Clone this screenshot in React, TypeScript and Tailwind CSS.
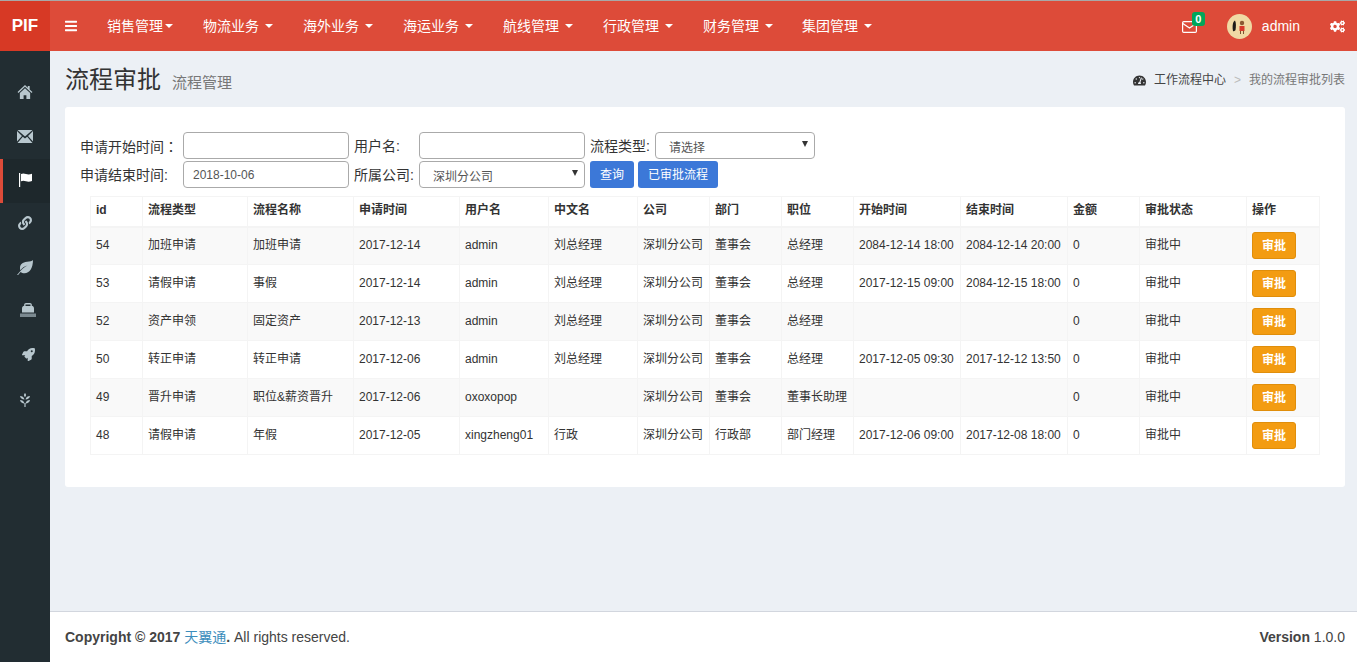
import { FaBars, FaCogs, FaLink, FaRocket, FaTachometerAlt } from 'react-icons/fa';

const menus = [
  { label: '销售管理', width: 'w-[96px]', tight: true },
  { label: '物流业务', width: 'w-[100px]' },
  { label: '海外业务', width: 'w-[100px]' },
  { label: '海运业务', width: 'w-[100px]' },
  { label: '航线管理', width: 'w-[100px]' },
  { label: '行政管理', width: 'w-[100px]' },
  { label: '财务管理', width: 'w-[99px]' },
  { label: '集团管理', width: 'w-[100px]' },
];

const columns = [
  { label: 'id', width: 'w-[52px]' },
  { label: '流程类型', width: 'w-[105px]' },
  { label: '流程名称', width: 'w-[106px]' },
  { label: '申请时间', width: 'w-[106px]' },
  { label: '用户名', width: 'w-[89px]' },
  { label: '中文名', width: 'w-[89px]' },
  { label: '公司', width: 'w-[72px]' },
  { label: '部门', width: 'w-[72px]' },
  { label: '职位', width: 'w-[72px]' },
  { label: '开始时间', width: 'w-[107px]' },
  { label: '结束时间', width: 'w-[107px]' },
  { label: '金额', width: 'w-[72px]' },
  { label: '审批状态', width: 'w-[107px]' },
  { label: '操作', width: 'w-[73px]' },
];

const rows = [
  ['54', '加班申请', '加班申请', '2017-12-14', 'admin', '刘总经理', '深圳分公司', '董事会', '总经理', '2084-12-14 18:00', '2084-12-14 20:00', '0', '审批中'],
  ['53', '请假申请', '事假', '2017-12-14', 'admin', '刘总经理', '深圳分公司', '董事会', '总经理', '2017-12-15 09:00', '2084-12-15 18:00', '0', '审批中'],
  ['52', '资产申领', '固定资产', '2017-12-13', 'admin', '刘总经理', '深圳分公司', '董事会', '总经理', '', '', '0', '审批中'],
  ['50', '转正申请', '转正申请', '2017-12-06', 'admin', '刘总经理', '深圳分公司', '董事会', '总经理', '2017-12-05 09:30', '2017-12-12 13:50', '0', '审批中'],
  ['49', '晋升申请', '职位&薪资晋升', '2017-12-06', 'oxoxopop', '', '深圳分公司', '董事会', '董事长助理', '', '', '0', '审批中'],
  ['48', '请假申请', '年假', '2017-12-05', 'xingzheng01', '行政', '深圳分公司', '行政部', '部门经理', '2017-12-06 09:00', '2017-12-08 18:00', '0', '审批中'],
];

function HomeIcon() {
  return (
    <svg width="16" height="14" viewBox="0 0 16 15" fill="currentColor">
      <path d="M8 0 0 7.500l1 1L8 2l7 6.500 1-1-3-2.800V1h-2v1.900L8 0z" />
      <path d="M8 3.500 2.500 8.600V15H6.500v-4h3v4h4V8.600L8 3.500z" />
    </svg>
  );
}

function MailIcon() {
  return (
    <svg width="16" height="13" viewBox="0 0 16 13" fill="currentColor">
      <path d="M.5 0h15L8 6.500.5 0z" />
      <path d="M0 1v10.500L5 6 0 1zM16 1v10.500L11 6l5-5z" />
      <path d="M5.800 6.800 8 8.500l2.200-1.700L15.500 13H.5l5.300-6.200z" />
    </svg>
  );
}

function FlagIcon() {
  return (
    <svg width="13" height="14" viewBox="0 0 13 14" fill="currentColor">
      <path d="M0 0h1.200v14H0z" />
      <path d="M2 1c2-1 3.500-.5 5 0 2 .7 4 .5 6-.3v7.300c-2 .8-4 1-6 .3-1.500-.5-3-1-5 0V1z" />
    </svg>
  );
}

function LeafIcon() {
  return (
    <svg width="16" height="15" viewBox="0 0 16 15" fill="currentColor">
      <path d="M16 0c-1 1-3 1.500-6 1.800C5.500 2.300 3 4.500 3 8c0 .8.100 1.500.4 2.200 1.600-2.200 4-3.800 7.100-4.700-3 1.400-6.300 4-9 7.800L0 15l1 .1 2.600-3.100c1 .9 2.300 1.300 3.900 1.300C12.500 13.300 16 8 16 0z" />
    </svg>
  );
}

function TowerIcon() {
  return (
    <svg width="16" height="14" viewBox="0 0 16 14" fill="currentColor">
      <path d="M2 9.500V5.500C2 3.800 3.200 3 4.200 2.800V1.500C4.200.8 5 0 6 0h4c1 0 1.800.8 1.800 1.500v1.300C12.800 3 14 3.800 14 5.500v4H2zM5.500 3h5V1.500h-5V3z" />
      <path d="M0 10.500h16V14H0z" opacity=".6" />
    </svg>
  );
}

function GrainIcon() {
  return (
    <svg width="10" height="14" viewBox="0 0 10 14" fill="currentColor">
      <path d="M5 0c1.300 1.100 1.500 2.700 0 4.200C3.500 2.700 3.700 1.100 5 0z" />
      <path d="M0 3c2 0 4.100 1 4.500 3.500C2.200 6.500.3 5.300 0 3zM10 3c-2 0-4.100 1-4.500 3.500C7.800 6.500 9.700 5.300 10 3z" />
      <path d="M0 7c2 0 4.100 1 4.500 3.500C2.200 10.500.3 9.300 0 7zM10 7c-2 0-4.100 1-4.500 3.500C7.800 10.500 9.700 9.300 10 7z" />
      <path d="M4.400 10h1.200v4H4.400z" />
    </svg>
  );
}

function OutlineMail() {
  return (
    <svg width="15" height="12" viewBox="0 0 15 12" fill="none" stroke="currentColor" strokeWidth="1.200">
      <rect x=".6" y=".6" width="13.800" height="10.800" rx="1.200" />
      <path d="M.8 2.500 7.500 7l6.700-4.500" />
    </svg>
  );
}

function Avatar() {
  return (
    <svg width="25" height="25" viewBox="0 0 25 25">
      <circle cx="12.500" cy="12.500" r="12.500" fill="#f0d9a4" />
      <path d="M8 6.500c-2 1-3 5-2 10.500 1 .5 2 0 2.500-1 .5-3 .8-7-.5-9.500z" fill="#1c1a18" />
      <circle cx="15" cy="9" r="2.200" fill="#8a5a34" />
      <path d="M12.500 12h5v5h-5z" fill="#d8392b" />
      <path d="M13 17h1v3h-1zM16 17h1v3h-1z" fill="#7a5230" />
    </svg>
  );
}

function SideItem({ children, active, pad = 'pb-[2px]' }: { children: React.ReactNode; active?: boolean; pad?: string }) {
  return (
    <div
      className={
        active
          ? `flex h-[44px] items-center justify-center border-l-[3px] border-[#dd4b39] bg-[#1e282c] pr-[3px] text-white ${pad}`
          : `flex h-[44px] items-center justify-center text-[#b8c7ce] ${pad}`
      }
    >
      {children}
    </div>
  );
}

const fieldClass = 'h-[27px] rounded-[4px] border border-[#aaa] bg-white text-xs text-[#555]';

function SelectBox({ value, width }: { value: string; width: string }) {
  return (
    <div className={`relative ${width}`}>
      <select className={`${fieldClass} w-full appearance-none pt-[4px] pl-[13px]`} defaultValue={value}>
        <option>{value}</option>
      </select>
      <span className="pointer-events-none absolute top-[9px] right-[7px] border-x-[3px] border-t-[6px] border-x-transparent border-t-[#333]" />
    </div>
  );
}

export default function App() {
  return (
    <div
      className="flex h-[662px] w-[1357px] flex-col overflow-hidden border-t border-[#a8a8a8] bg-[#ecf0f5] text-[#333]"
      style={{ fontFamily: '"Liberation Sans", "Noto Sans CJK SC", sans-serif' }}
    >
      <header className="flex h-[50px] shrink-0 bg-[#dd4b39] text-white">
        <div className="flex w-[50px] items-center justify-center bg-[#d73925] text-[17px] font-bold">PIF</div>
        <div className="flex w-[57px] items-center pl-[15px]">
          <FaBars className="h-[14px] w-[12px]" />
        </div>
        <nav className="flex items-center text-sm">
          {menus.map((m) => (
            <div key={m.label} className={`flex items-center ${m.width}`}>
              <span>{m.label}</span>
              <span className={`${m.tight ? 'ml-[2px]' : 'ml-[6px]'} border-x-4 border-t-4 border-x-transparent border-t-white`} />
            </div>
          ))}
        </nav>
        <div className="ml-auto flex items-center pr-[12px]">
          <div className="relative mr-[30px] pt-[2px]">
            <OutlineMail />
            <span className="absolute -top-[7px] left-[10px] h-[14px] w-[13px] rounded-[3px] bg-[#00a65a] text-center text-[11px] leading-[14px] font-bold">0</span>
          </div>
          <Avatar />
          <span className="mr-[30px] ml-[10px] text-sm">admin</span>
          <FaCogs className="h-[15px] w-[15px]" />
        </div>
      </header>

      <div className="flex min-h-0 flex-1">
        <aside className="w-[50px] shrink-0 bg-[#222d32] pt-[20px]">
          <SideItem><HomeIcon /></SideItem>
          <SideItem><MailIcon /></SideItem>
          <SideItem active><FlagIcon /></SideItem>
          <SideItem pad="pb-[4px]"><FaLink className="h-[14px] w-[14px]" /></SideItem>
          <SideItem pad="pb-[4px]"><LeafIcon /></SideItem>
          <SideItem pad="pb-[6px] pl-[6px]"><TowerIcon /></SideItem>
          <SideItem pad="pb-[6px] pl-[6px]"><FaRocket className="h-[13px] w-[13px]" /></SideItem>
          <SideItem><GrainIcon /></SideItem>
        </aside>

        <div className="flex min-w-0 flex-1 flex-col">
          <main className="flex-1 pr-[12px] pl-[15px]">
            <div className="flex h-[56px] items-center justify-between pt-[2px]">
              <div className="flex items-baseline">
                <h1 className="text-2xl leading-[30px] font-normal">流程审批</h1>
                <span className="ml-[11px] text-[15px] text-[#777]">流程管理</span>
              </div>
              <div className="flex items-center text-xs">
                <FaTachometerAlt className="mr-[8px] h-[13px] w-[13px]" />
                <span className="text-[#444]">工作流程中心</span>
                <span className="mx-[8px] text-[#bbb]">&gt;</span>
                <span className="text-[#777]">我的流程审批列表</span>
              </div>
            </div>

            <section className="h-[380px] rounded-[3px] bg-white pt-[25px]">
              <div className="flex h-[29px] items-start pl-[15px] text-sm">
                <label className="w-[103px] pt-[4px]">申请开始时间<span className="font-['Noto_Sans_CJK_TC']">：</span></label>
                <input className={`${fieldClass} w-[166px]`} />
                <label className="w-[70px] pt-[4px] pl-[5px]">用户名:</label>
                <input className={`${fieldClass} w-[166px]`} />
                <label className="w-[70px] pt-[4px] pl-[5px]">流程类型:</label>
                <SelectBox value="请选择" width="w-[160px]" />
              </div>
              <div className="flex h-[27px] items-start pl-[15px] text-sm">
                <label className="w-[103px] pt-[4px]">申请结束时间:</label>
                <input className={`${fieldClass} w-[166px] px-[9px]`} defaultValue="2018-10-06" />
                <label className="w-[70px] pt-[4px] pl-[5px]">所属公司:</label>
                <SelectBox value="深圳分公司" width="w-[166px]" />
                <button className="ml-[5px] h-[27px] w-[44px] rounded-[3px] bg-[#3c78d8] text-xs text-white">查询</button>
                <button className="ml-[4px] h-[27px] w-[80px] rounded-[3px] bg-[#3c78d8] text-xs text-white">已审批流程</button>
              </div>

              <div className="mt-[8px] px-[25px]">
                <table className="w-[1229px] table-fixed border-collapse text-xs">
                  <thead>
                    <tr className="h-[30px]">
                      {columns.map((c) => (
                        <th key={c.label} className={`${c.width} border border-b-2 border-[#f4f4f4] px-[5px] pb-[2px] text-left font-bold`}>
                          {c.label}
                        </th>
                      ))}
                    </tr>
                  </thead>
                  <tbody>
                    {rows.map((row, i) => (
                      <tr key={row[0]} className={i % 2 === 0 ? 'h-[38px] bg-[#f9f9f9]' : 'h-[38px] bg-white'}>
                        {row.map((cell, j) => (
                          <td key={j} className="truncate border border-[#f4f4f4] px-[5px] pb-[2px]">{cell}</td>
                        ))}
                        <td className="border border-[#f4f4f4] px-[5px]">
                          <button className="h-[27px] w-[44px] rounded-[3px] border border-[#e08e0b] bg-[#f39c12] text-xs font-bold text-white">审批</button>
                        </td>
                      </tr>
                    ))}
                  </tbody>
                </table>
              </div>
            </section>
          </main>

          <footer className="flex h-[51px] shrink-0 items-center justify-between border-t border-[#d2d6de] bg-white pr-[12px] pl-[15px] text-sm text-[#444]">
            <div>
              <b>Copyright © 2017 <span className="font-normal text-[#3c8dbc]">天翼通</span>.</b> All rights reserved.
            </div>
            <div>
              <b>Version</b> 1.0.0
            </div>
          </footer>
        </div>
      </div>
    </div>
  );
}
